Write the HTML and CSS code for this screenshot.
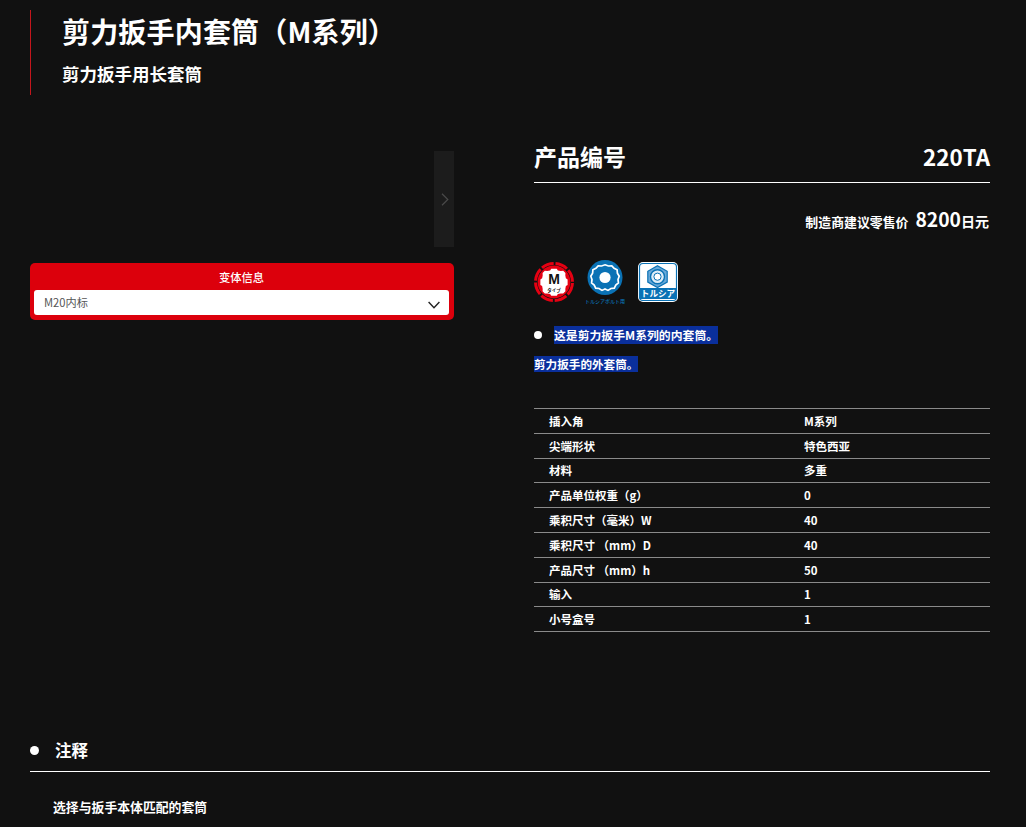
FILE: index.html
```html
<!DOCTYPE html>
<html lang="zh">
<head>
<meta charset="utf-8">
<title>剪力扳手内套筒（M系列）</title>
<link rel="stylesheet" href="styles.css">
</head>
<body>
<div class="page">
  <header class="head">
    <h1 class="title">剪力扳手内套筒（M系列）</h1>
    <p class="subtitle">剪力扳手用长套筒</p>
  </header>
  <div class="columns">
    <section class="left">
      <div class="gallery">
        <div class="next">
          <svg class="next-icon" width="8" height="13" viewBox="0 0 8 13"><path d="M1 .8 6.8 6.5 1 12.2" fill="none" stroke="#4a4a4a" stroke-width="1.2"/></svg>
        </div>
      </div>
      <div class="variant">
        <div class="variant-label">变体信息</div>
        <div class="select">
          <span>M20内标</span>
          <svg class="caret" width="12" height="8" viewBox="0 0 12 8"><path d="M.6 1 6 6.8 11.4 1" fill="none" stroke="#222" stroke-width="1.4"/></svg>
        </div>
      </div>
    </section>
    <section class="right">
      <div class="code-row"><span>产品编号</span><span class="code">220TA</span></div>
      <div class="price-row"><span class="price-label">制造商建议零售价</span><span class="price">8200</span><span class="price-unit">日元</span></div>
      <div class="badges">
        <svg class="badge-m" width="40" height="40" viewBox="0 0 40 40">
          <circle cx="20" cy="20" r="18.5" fill="none" stroke="#e60012" stroke-width="3" stroke-dasharray="12.6 1.93" stroke-dashoffset="-1"/>
          <circle cx="20" cy="20" r="16.4" fill="#e60012"/>
          <path transform="translate(20 20) scale(.92) translate(-20 -20)" d="M17 5.6h6l1.2 1.9 3.2.5 2.6-.1 2.4 2.4-.1 2.6.6 3.1 1.9 1.2v6l-1.9 1.2-.6 3.1.1 2.6-2.4 2.4-2.6-.1-3.2.6-1.2 1.9h-6l-1.2-1.9-3.2-.6-2.6.1-2.4-2.4.1-2.6-.6-3.1-1.9-1.2v-6l1.9-1.2.6-3.1-.1-2.6 2.4-2.4 2.6.1 3.2-.5z" fill="#fff"/>
          <text x="20" y="21.5" class="badge-m-letter" text-anchor="middle">M</text>
          <text x="20" y="30" class="badge-m-small" text-anchor="middle">タイプ</text>
        </svg>
        <svg class="badge-b" width="42" height="46" viewBox="0 0 42 46">
          <circle cx="21" cy="17.5" r="17.5" fill="#0a72b5"/>
          <path d="M21 4.8l3.4 1.2 3.4-.2 2.3 2.5 3 1.5.3 3.4 1.8 3-1.2 3.3.4 3.4-2.6 2.2-1.5 3-3.4.4-2.9 1.9-3-1.4-3 1.4-2.9-1.9-3.4-.4-1.5-3-2.6-2.2.4-3.4-1.2-3.3 1.8-3 .3-3.4 3-1.5 2.3-2.5 3.4.2z" fill="none" stroke="#fff" stroke-width="1.7"/>
          <circle cx="21" cy="17.5" r="5.6" fill="#fff"/>
          <text x="21" y="43" class="badge-b-text" text-anchor="middle">トルシアボルト用</text>
        </svg>
        <svg class="badge-t" width="40" height="40" viewBox="0 0 40 40">
          <rect width="40" height="40" rx="5" fill="#fff"/>
          <rect x="1.5" y="1.5" width="37" height="37" rx="3.5" fill="#fff" stroke="#0a72b5" stroke-width="1.2"/>
          <path d="M19.5 3.8 29.2 9.3v10.8l-9.7 5.5-9.7-5.5V9.3z" fill="#6aa9d8" stroke="#0a72b5" stroke-width="1.2"/>
          <circle cx="19.5" cy="14.7" r="7" fill="#dcecf7" stroke="#0a72b5" stroke-width="1.4"/>
          <circle cx="19.5" cy="14.7" r="3.6" fill="#fff" stroke="#0a72b5"/>
          <rect x="2" y="26" width="36" height="11" fill="#0a72b5"/>
          <text x="20" y="35" class="badge-t-text" text-anchor="middle">トルシア</text>
        </svg>
      </div>
      <ul class="desc-list"><li><mark class="mark-first">这是剪力扳手M系列的内套筒。</mark></li></ul>
      <p class="desc"><mark>剪力扳手的外套筒。</mark></p>
      <table class="spec">
        <tr><th>插入角</th><td>M系列</td></tr>
        <tr><th>尖端形状</th><td>特色西亚</td></tr>
        <tr><th>材料</th><td>多重</td></tr>
        <tr><th>产品单位权重（g）</th><td>0</td></tr>
        <tr><th>乘积尺寸（毫米）W</th><td>40</td></tr>
        <tr><th>乘积尺寸 （mm）D</th><td>40</td></tr>
        <tr><th>产品尺寸 （mm）h</th><td>50</td></tr>
        <tr><th>输入</th><td>1</td></tr>
        <tr><th>小号盒号</th><td>1</td></tr>
      </table>
    </section>
  </div>
  <section class="notes">
    <h2 class="notes-title">注释</h2>
    <p class="notes-text">选择与扳手本体匹配的套筒</p>
  </section>
</div>
</body>
</html>
```
FILE: styles.css
```css
html, body {
  margin: 0;
  padding: 0;
  background: #111;
  height: 827px;
  overflow: hidden;
}
body {
  color: #fff;
  font-family: "Noto Sans CJK JP", "Noto Sans", sans-serif;
}
.page {
  padding: 10px 36px 0 30px;
}
.head {
  border-left: 1px solid #c4161c;
  padding-left: 31px;
  height: 85px;
  box-sizing: border-box;
}
.title {
  margin: 0;
  font-size: 28px;
  letter-spacing: .18px;
  line-height: 42px;
  font-weight: 700;
}
.subtitle {
  margin: 9px 0 0;
  font-size: 17.5px;
  line-height: 26px;
  font-weight: 700;
}
.columns {
  display: grid;
  grid-template-columns: 424px 456px;
  column-gap: 80px;
  margin-top: 56px;
}
.gallery {
  display: flex;
  justify-content: flex-end;
  height: 96px;
}
.next {
  width: 20px;
  background: #1c1c1c;
  display: flex;
  align-items: center;
  justify-content: center;
}
.next-icon {
  margin-left: 2px;
}
.variant {
  margin-top: 16px;
  background: #dc000c;
  border-radius: 5px;
  padding: 5px 5px 5px 4px;
  height: 57px;
  box-sizing: border-box;
}
.variant-label {
  text-align: center;
  font-size: 11.3px;
  line-height: 18px;
  font-weight: 500;
}
.select {
  margin-top: 4px;
  height: 25px;
  background: #fff;
  border-radius: 3px;
  color: #555;
  font-size: 11.2px;
  line-height: 25px;
  padding: 0 9px 0 10px;
  display: flex;
  justify-content: space-between;
  align-items: center;
}
.caret {
  margin-top: 5px;
}
.code-row {
  display: flex;
  justify-content: space-between;
  align-items: center;
  margin-top: -11px;
  padding-bottom: 10px;
  font-size: 23px;
  line-height: 32px;
  font-weight: 700;
  border-bottom: 1px solid #fff;
}
.code {
  font-size: 22.4px;
}
.price-row {
  display: flex;
  justify-content: flex-end;
  align-items: baseline;
  margin-top: 21px;
  line-height: 30px;
  font-weight: 700;
}
.price-label {
  font-size: 12.9px;
  margin-right: 7px;
}
.price {
  font-size: 19.3px;
}
.price-unit {
  font-size: 14px;
  margin-right: 1px;
}
.badges {
  display: flex;
  align-items: flex-start;
  gap: 10px;
  margin-top: 23px;
  height: 46px;
}
.badge-m, .badge-t {
  margin-top: 2px;
}
.badge-t {
  margin-left: 2px;
}
.badge-m-letter {
  font-size: 14px;
  font-weight: 700;
  fill: #111;
  font-family: "Liberation Sans", sans-serif;
}
.badge-m-small {
  font-size: 4.5px;
  font-weight: 700;
  fill: #111;
}
.badge-b-text {
  font-size: 5px;
  font-weight: 500;
  fill: #0a72b5;
}
.badge-t-text {
  font-size: 8.6px;
  font-weight: 700;
  fill: #fff;
}
.desc-list {
  list-style: none;
  margin: 20px 0 0;
  padding: 0;
  font-size: 12px;
  line-height: 18px;
  font-weight: 700;
}
.desc-list li {
  display: flex;
  align-items: center;
}
.desc-list li::before {
  content: "";
  width: 8px;
  height: 8px;
  border-radius: 50%;
  background: #fff;
  margin-right: 12px;
}
.mark-first {
  font-size: 11.85px;
}
mark {
  background: #0a2f9c;
  color: #fff;
  padding: 0;
}
.desc {
  margin: 11px 0 0;
  font-size: 11.6px;
  line-height: 18px;
  font-weight: 700;
}
.spec {
  width: 100%;
  margin-top: 35px;
  border-collapse: collapse;
  border-top: 1px solid #8a8a8a;
  table-layout: fixed;
  font-size: 11.5px;
}
.spec tr {
  border-bottom: 1px solid #8a8a8a;
  height: 24.8px;
}
.spec th, .spec td {
  padding: 0;
  text-align: left;
  font-weight: 700;
  line-height: 16px;
}
.spec th {
  padding-left: 15px;
  width: 255px;
}
.notes {
  margin-top: 97px;
}
.notes-title {
  display: flex;
  align-items: center;
  margin: 0;
  height: 40px;
  padding: 1px 0;
  font-size: 16.5px;
  line-height: 40px;
  font-weight: 700;
  border-bottom: 1px solid #fff;
}
.notes-title::before {
  content: "";
  width: 9px;
  height: 9px;
  border-radius: 50%;
  background: #fff;
  margin-right: 16px;
}
.notes-text {
  margin: 25px 0 0 23px;
  font-size: 12.85px;
  line-height: 20px;
  font-weight: 700;
}
```
